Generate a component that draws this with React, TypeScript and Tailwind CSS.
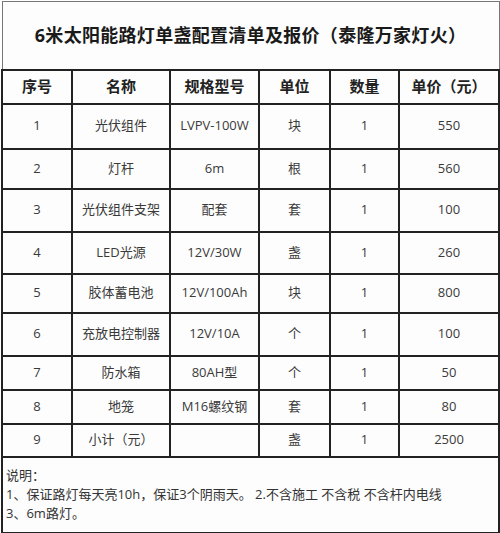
const rows = [
  { no: '1', name: '光伏组件', spec: 'LVPV-100W', unit: '块', qty: '1', price: '550', h: 'h-[45px]' },
  { no: '2', name: '灯杆', spec: '6m', unit: '根', qty: '1', price: '560', h: 'h-[40px]' },
  { no: '3', name: '光伏组件支架', spec: '配套', unit: '套', qty: '1', price: '100', h: 'h-[43px]' },
  { no: '4', name: 'LED光源', spec: '12V/30W', unit: '盏', qty: '1', price: '260', h: 'h-[42px]' },
  { no: '5', name: '胶体蓄电池', spec: '12V/100Ah', unit: '块', qty: '1', price: '800', h: 'h-[39px]' },
  { no: '6', name: '充放电控制器', spec: '12V/10A', unit: '个', qty: '1', price: '100', h: 'h-[43px]' },
  { no: '7', name: '防水箱', spec: '80AH型', unit: '个', qty: '1', price: '50', h: 'h-[34px]' },
  { no: '8', name: '地笼', spec: 'M16螺纹钢', unit: '套', qty: '1', price: '80', h: 'h-[34px]' },
  { no: '9', name: '小计（元）', spec: '', unit: '盏', qty: '1', price: '2500', h: 'h-[33px]' },
]

const cell = 'border-2 border-[#222] text-center align-middle p-0'

export default function App() {
  return (
    <div className="min-h-screen bg-white pt-[1px] pl-[1px] font-['Open_Sans','Noto_Sans_CJK_SC',sans-serif]">
      <table className="table-fixed border-collapse w-[497px] bg-[#fdfdfd]">
        <colgroup>
          <col className="w-[70px]" />
          <col className="w-[98px]" />
          <col className="w-[89px]" />
          <col className="w-[71px]" />
          <col className="w-[69px]" />
          <col className="w-[100px]" />
        </colgroup>
        <tbody>
          <tr className="h-[68px]">
            <td
              colSpan={6}
              className="border border-[#777] border-b-2 border-b-[#222] text-center align-middle text-[18px] font-bold text-[#1a1a1a] tracking-[0.3px]"
            >
              6米太阳能路灯单盏配置清单及报价（泰隆万家灯火）
            </td>
          </tr>
          <tr className="h-[34px] text-[15px] font-bold text-[#222]">
            <td className={cell}>序号</td>
            <td className={cell}>名称</td>
            <td className={cell}>规格型号</td>
            <td className={cell}>单位</td>
            <td className={cell}>数量</td>
            <td className={cell}>单价（元）</td>
          </tr>
          {rows.map((r) => (
            <tr key={r.no} className={`${r.h} text-[13px] text-[#3a3a3a]`}>
              <td className={cell}>{r.no}</td>
              <td className={cell}>{r.name}</td>
              <td className={`${cell} whitespace-nowrap`}>{r.spec}</td>
              <td className={cell}>{r.unit}</td>
              <td className={cell}>{r.qty}</td>
              <td className={cell}>{r.price}</td>
            </tr>
          ))}
          <tr className="h-[76px]">
            <td colSpan={6} className="border-2 border-[#222] align-top pl-[3px] pt-[8px] text-[13px] leading-[19px] text-[#333]">
              <p>说明：</p>
              <p>1、保证路灯每天亮10h，保证3个阴雨天。 2.不含施工 不含税 不含杆内电线</p>
              <p>3、6m路灯。</p>
            </td>
          </tr>
        </tbody>
      </table>
    </div>
  )
}
